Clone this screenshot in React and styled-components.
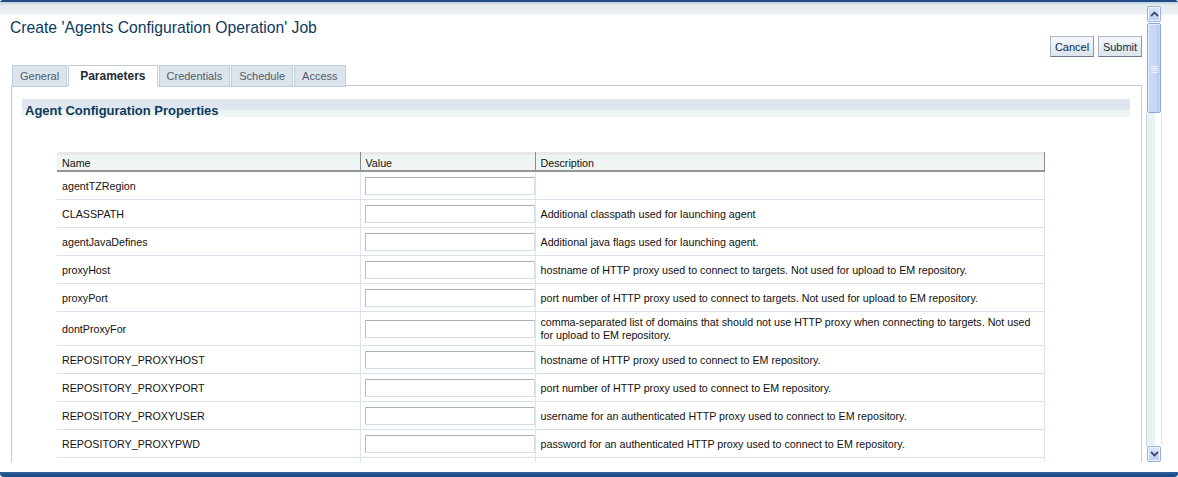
import React from 'react'
import styled, { createGlobalStyle } from 'styled-components'

const rows = [
  { name: 'agentTZRegion', desc: [] },
  { name: 'CLASSPATH', desc: ['Additional classpath used for launching agent'] },
  { name: 'agentJavaDefines', desc: ['Additional java flags used for launching agent.'] },
  { name: 'proxyHost', desc: ['hostname of HTTP proxy used to connect to targets. Not used for upload to EM repository.'] },
  { name: 'proxyPort', desc: ['port number of HTTP proxy used to connect to targets. Not used for upload to EM repository.'] },
  {
    name: 'dontProxyFor',
    desc: [
      'comma-separated list of domains that should not use HTTP proxy when connecting to targets. Not used',
      'for upload to EM repository.',
    ],
  },
  { name: 'REPOSITORY_PROXYHOST', desc: ['hostname of HTTP proxy used to connect to EM repository.'] },
  { name: 'REPOSITORY_PROXYPORT', desc: ['port number of HTTP proxy used to connect to EM repository.'] },
  { name: 'REPOSITORY_PROXYUSER', desc: ['username for an authenticated HTTP proxy used to connect to EM repository.'] },
  { name: 'REPOSITORY_PROXYPWD', desc: ['password for an authenticated HTTP proxy used to connect to EM repository.'] },
  { name: '', desc: [] },
]

const tabs = ['General', 'Parameters', 'Credentials', 'Schedule', 'Access']

export default () => (
  <>
    <GlobalStyle />
    <Frame>
      <Main>
        <Viewport>
          <Title>Create 'Agents Configuration Operation' Job</Title>
          <Actions>
            <Button>Cancel</Button>
            <Button>Submit</Button>
          </Actions>
          <TabStrip>
            {tabs.map(t => (
              <Tab key={t} active={t === 'Parameters'}>{t}</Tab>
            ))}
          </TabStrip>
          <Panel>
            <SectionHeader>Agent Configuration Properties</SectionHeader>
            <Table>
              <colgroup>
                <col style={{ width: 303 }} />
                <col style={{ width: 175 }} />
                <col style={{ width: 509 }} />
              </colgroup>
              <thead>
                <tr>
                  <Th>Name</Th>
                  <Th divider>Value</Th>
                  <Th divider last>Description</Th>
                </tr>
              </thead>
              <tbody>
                {rows.map((r, i) => (
                  <tr key={i}>
                    <Td>{r.name}</Td>
                    <ValueTd divider>
                      <Field type="text" />
                    </ValueTd>
                    <Td divider last>
                      {r.desc.map((line, j) => (
                        <Line key={j}>{line}</Line>
                      ))}
                    </Td>
                  </tr>
                ))}
              </tbody>
            </Table>
          </Panel>
        </Viewport>
        <Scrollbar>
          <ArrowButton>
            <svg width="9" height="6" viewBox="0 0 9 6">
              <polyline points="1,5 4.5,1.5 8,5" fill="none" stroke="#3b4d70" strokeWidth="1.8" />
            </svg>
          </ArrowButton>
          <Thumb>
            <Grip>
              <i /><i /><i /><i />
            </Grip>
          </Thumb>
          <Track />
          <ArrowButton>
            <svg width="9" height="6" viewBox="0 0 9 6">
              <polyline points="1,1 4.5,4.5 8,1" fill="none" stroke="#3b4d70" strokeWidth="1.8" />
            </svg>
          </ArrowButton>
        </Scrollbar>
      </Main>
      <Footer />
      <BottomEdge />
    </Frame>
  </>
)

const GlobalStyle = createGlobalStyle`
  html, body {
    margin: 0;
    padding: 0;
    background: #fff;
  }
  body {
    font-family: 'Liberation Sans', Arial, sans-serif;
    color: #000;
  }
`

const Frame = styled.div`
  width: 1178px;
  height: 477px;
  display: flex;
  flex-direction: column;
  overflow: hidden;
  background: linear-gradient(
    to bottom,
    #1d4c88 0,
    #1d4c88 2px,
    #bccbdd 2px,
    #e3eaee 5px,
    #edf2f3 14px,
    #ffffff 15px
  );
  border-top-left-radius: 3px;
  border-top-right-radius: 3px;
`

const Main = styled.div`
  display: flex;
  margin-top: 6px;
  height: 456px;
`

const Viewport = styled.div`
  flex: 1;
  overflow: hidden;
  padding: 13px 4px 0 10px;
`

const Title = styled.h1`
  margin: 0;
  font-size: 15.7px;
  line-height: 18px;
  font-weight: normal;
  color: #0c3a5d;
`

const Actions = styled.div`
  display: flex;
  justify-content: flex-end;
  gap: 4px;
  margin-top: -1px;
`

const Button = styled.button`
  height: 21px;
  width: 44px;
  padding: 0;
  font-family: 'Liberation Sans', Arial, sans-serif;
  font-size: 11px;
  color: #0e2a47;
  background: linear-gradient(to bottom, #f7f9fb, #dbe4ec);
  border: 1px solid #aab6c4;
  border-bottom-color: #6e7c8c;
  border-right-color: #8896a6;
`

const TabStrip = styled.div`
  display: flex;
  gap: 1px;
  margin: 8px 0 0 2px;
  height: 21px;
`

const Tab = styled.div`
  height: 20px;
  padding: 0 ${p => (p.active ? '11px' : '7px')};
  display: flex;
  align-items: center;
  font-size: ${p => (p.active ? '12px' : '11px')};
  font-weight: ${p => (p.active ? 'bold' : 'normal')};
  color: ${p => (p.active ? '#1d2a36' : '#4e5b68')};
  background: ${p => (p.active ? '#fff' : '#dce4ed')};
  border: 1px solid #c2cdda;
  border-bottom: ${p => (p.active ? '1px solid #fff' : '1px solid #c2cdda')};
  position: relative;
  z-index: 1;
`

const Panel = styled.div`
  margin: -1px 0 0 1px;
  border: 1px solid #c3cdd9;
  border-bottom: none;
  padding: 13px 11px 0 10px;
  height: 400px;
`

const SectionHeader = styled.h2`
  margin: 0;
  height: 18px;
  padding-left: 3px;
  font-size: 13px;
  font-weight: bold;
  line-height: 24px;
  color: #0c3a5d;
  background: linear-gradient(to bottom, #dfe6ef 0, #dfe6ef 11px, #eef5f3 11px);
  overflow: visible;
`

const Table = styled.table`
  margin: 35px 0 0 35px;
  width: 987px;
  table-layout: fixed;
  border-collapse: collapse;
  font-size: 10.7px;
`

const Th = styled.th`
  height: 14px;
  padding: 4px 0 0 5px;
  text-align: left;
  font-weight: normal;
  color: #111;
  background: linear-gradient(to bottom, #e8e8e8 0, #e8e8e8 3px, #eef5f3 3px);
  border-bottom: 2px solid #959595;
  border-left: ${p => (p.divider ? '1px solid #8c8c8c' : 'none')};
  border-right: ${p => (p.last ? '1px solid #8c8c8c' : 'none')};
`

const Td = styled.td`
  height: 20px;
  padding: 4px 5px 3px 5px;
  vertical-align: middle;
  line-height: 13px;
  color: #111;
  border-bottom: 1px solid #d9e2ec;
  border-left: ${p => (p.divider ? '1px solid #dce4ee' : 'none')};
  border-right: ${p => (p.last ? '1px solid #dce4ee' : 'none')};
`

const Line = styled.div`
  white-space: nowrap;
`

const ValueTd = styled(Td)`
  padding: 4px 0 3px 4px;
`

const Field = styled.input`
  display: block;
  box-sizing: border-box;
  width: 170px;
  height: 18px;
  margin: 0;
  padding: 0 2px;
  background: #fff;
  border: 1px solid #d3dbe5;
  border-top-color: #a9b0b8;
  border-left-color: #b8bfc7;
  outline: none;
`

const Scrollbar = styled.div`
  width: 16px;
  margin-right: 16px;
  display: flex;
  flex-direction: column;
`

const ArrowButton = styled.div`
  box-sizing: border-box;
  height: 16px;
  margin: 0 1px;
  display: flex;
  align-items: center;
  justify-content: center;
  border: 1px solid #9ab1dd;
  border-radius: 2px;
  background: linear-gradient(to bottom, #dbe5fa, #bccdf3);
  box-shadow: inset 0 0 0 1px #eef3fd;
`

const Thumb = styled.div`
  box-sizing: border-box;
  height: 90px;
  margin: 1px 1px 0;
  display: flex;
  align-items: center;
  justify-content: center;
  border: 1px solid #8ea7da;
  border-radius: 2px;
  background: linear-gradient(to right, #c9d7f6 0, #c9d7f6 9px, #b4c7f0 9px, #b4c7f0 10px, #c3d3f5 10px);
  box-shadow: inset 1px 1px 0 #e7eefc;
`

const Grip = styled.div`
  display: flex;
  flex-direction: column;
  gap: 1px;
  margin-top: 2px;
  i {
    display: block;
    width: 7px;
    height: 1px;
    background: #eef3fd;
  }
`

const Track = styled.div`
  flex: 1;
  border-left: 1px solid #cbd3de;
  border-right: 1px solid #e1e5ea;
  background: linear-gradient(to right, #e9f2f0 0, #e9f2f0 8px, #fff 8px);
`

const Footer = styled.div`
  flex: 1;
  background: #fff;
`

const BottomEdge = styled.div`
  height: 5px;
  background: #1d4c88;
  border-bottom-left-radius: 4px;
  border-bottom-right-radius: 4px;
  box-shadow: inset 0 2px 0 #2b5c98;
`
